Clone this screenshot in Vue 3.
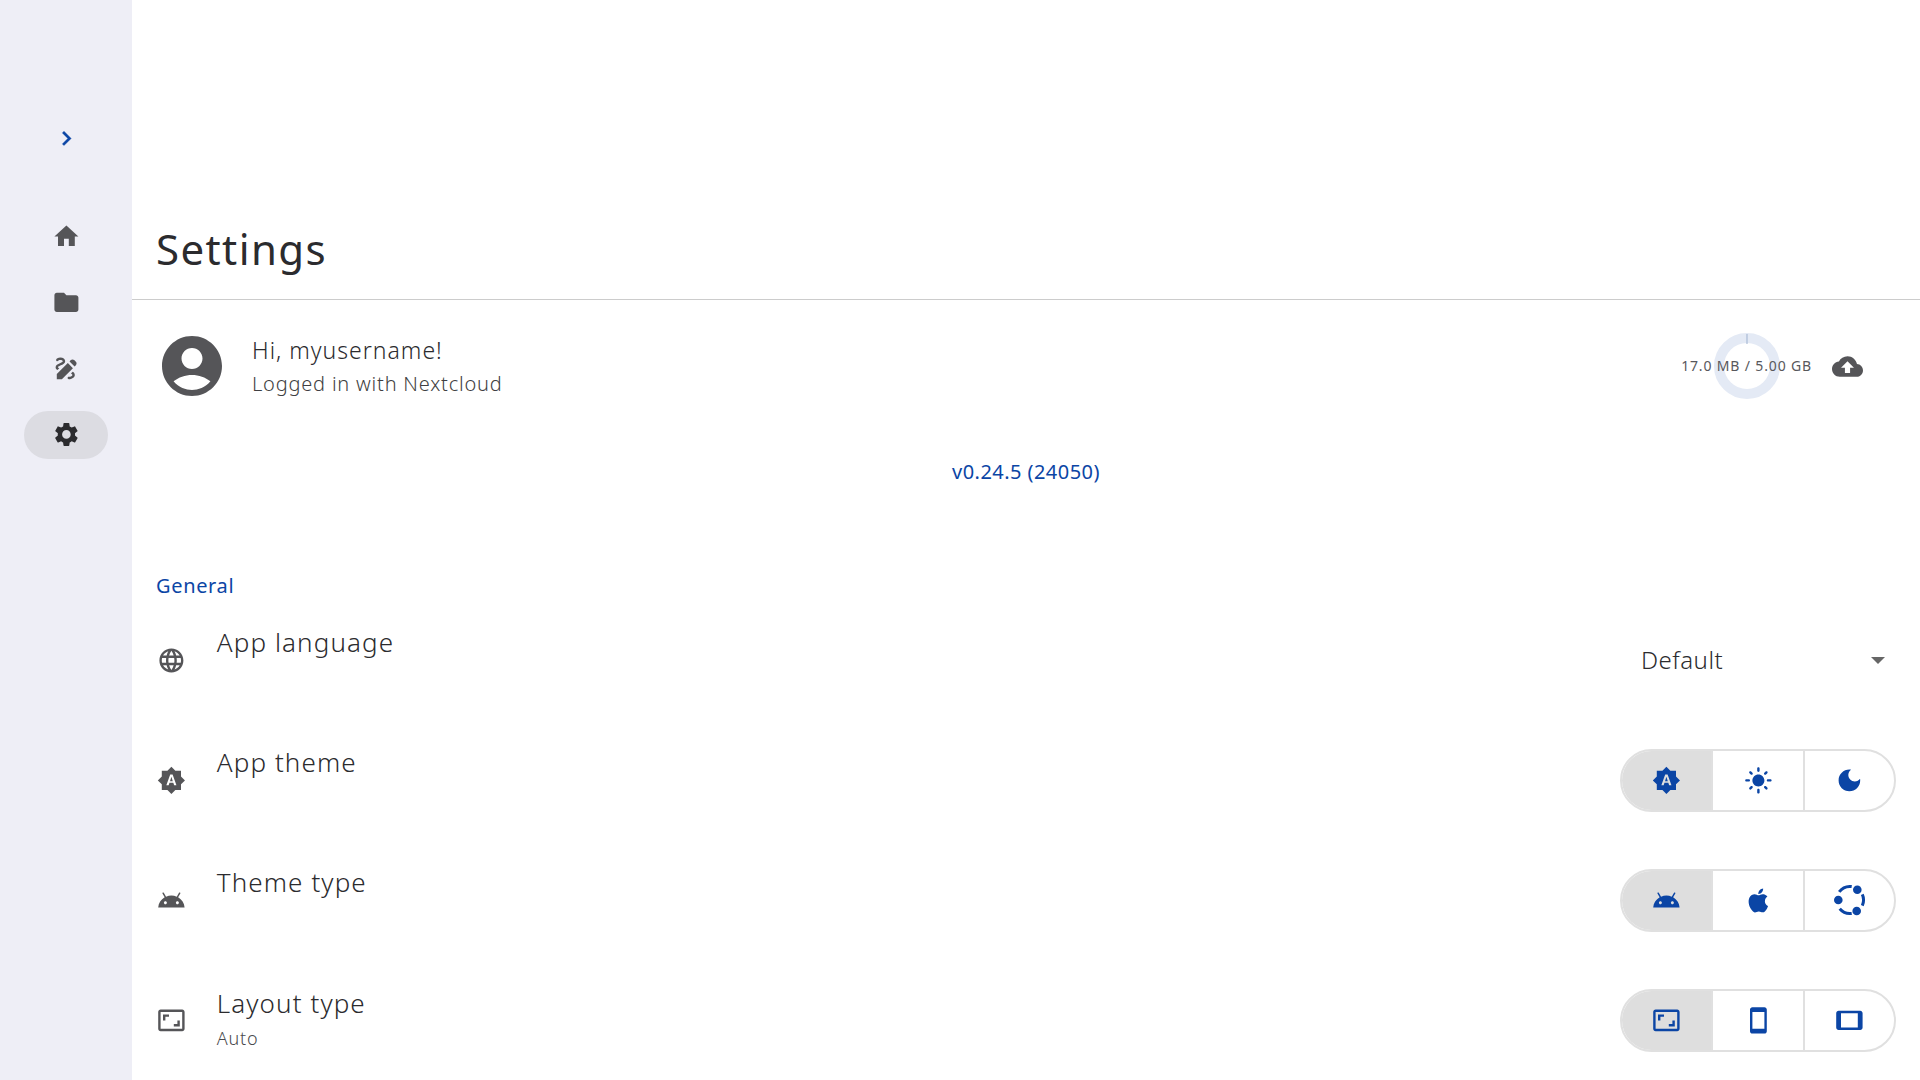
<script setup>
const p = {
  home: 'M10 20v-6h4v6h5v-8h3L12 3 2 12h3v8z',
  folder: 'M10 4H4c-1.1 0-1.99.9-1.99 2L2 18c0 1.1.9 2 2 2h16c1.1 0 2-.9 2-2V8c0-1.1-.9-2-2-2h-8l-2-2z',
  draw: 'M18.85 10.39l1.06-1.06c.78-.78.78-2.05 0-2.83L18.5 5.09c-.78-.78-2.05-.78-2.83 0l-1.06 1.06 4.24 4.24zm-5.66-2.83L4 16.76V21h4.24l9.19-9.19-4.24-4.25zM19 17.5c0 2.19-2.54 3.5-5 3.5-.55 0-1-.45-1-1s.45-1 1-1c1.54 0 3-.73 3-1.5 0-.47-.48-.87-1.23-1.2l1.48-1.48c1.07.63 1.75 1.47 1.75 2.68zM4.58 13.35C3.61 12.79 3 12.06 3 11c0-1.8 1.89-2.63 3.56-3.36C7.59 7.18 9 6.56 9 6c0-.41-.78-1-2-1-1.26 0-1.8.61-1.83.64-.35.41-.98.46-1.4.12-.41-.34-.49-.95-.15-1.37C3.73 4.24 4.76 3 7 3s4 1.32 4 3c0 1.87-1.93 2.72-3.64 3.47C6.42 9.88 5 10.5 5 11c0 .31.43.6 1.07.86l-1.49 1.49z',
  gear: 'M19.14 12.94c.04-.3.06-.61.06-.94 0-.32-.02-.64-.07-.94l2.03-1.58c.18-.14.23-.41.12-.61l-1.92-3.32c-.12-.22-.37-.29-.59-.22l-2.39.96c-.5-.38-1.03-.7-1.62-.94l-.36-2.54c-.04-.24-.24-.41-.48-.41h-3.84c-.24 0-.43.17-.47.41l-.36 2.54c-.59.24-1.13.57-1.62.94l-2.39-.96c-.22-.08-.47 0-.59.22L2.74 8.87c-.12.21-.08.47.12.61l2.03 1.58c-.05.3-.09.63-.09.94s.02.64.07.94l-2.03 1.58c-.18.14-.23.41-.12.61l1.92 3.32c.12.22.37.29.59.22l2.39-.96c.5.38 1.03.7 1.62.94l.36 2.54c.05.24.24.41.48.41h3.84c.24 0 .44-.17.47-.41l.36-2.54c.59-.24 1.13-.56 1.62-.94l2.39.96c.22.08.47 0 .59-.22l1.92-3.32c.12-.22.07-.47-.12-.61l-2.01-1.58zM12 15.6c-1.98 0-3.6-1.62-3.6-3.6s1.62-3.6 3.6-3.6 3.6 1.62 3.6 3.6-1.62 3.6-3.6 3.6z',
  account: 'M12 2C6.48 2 2 6.48 2 12s4.48 10 10 10 10-4.48 10-10S17.52 2 12 2zm0 4c1.93 0 3.5 1.57 3.5 3.5S13.93 13 12 13s-3.5-1.57-3.5-3.5S10.07 6 12 6zm0 14c-2.03 0-4.43-.82-6.14-2.88C7.55 15.8 9.68 15 12 15s4.45.8 6.14 2.12C16.43 19.18 14.03 20 12 20z',
  cloud: 'M19.35 10.04C18.67 6.59 15.64 4 12 4 9.11 4 6.6 5.64 5.35 8.04 2.34 8.36 0 10.91 0 14c0 3.31 2.69 6 6 6h13c2.76 0 5-2.24 5-5 0-2.64-2.05-4.78-4.65-4.96zM14 13v4h-4v-4H7l5-5 5 5h-3z',
  language: 'M11.99 2C6.47 2 2 6.48 2 12s4.47 10 9.99 10C17.52 22 22 17.52 22 12S17.52 2 11.99 2zm6.93 6h-2.95c-.32-1.25-.78-2.45-1.38-3.56 1.84.63 3.37 1.91 4.33 3.56zM12 4.04c.83 1.2 1.48 2.53 1.91 3.96h-3.82c.43-1.43 1.08-2.76 1.91-3.96zM4.26 14C4.1 13.36 4 12.69 4 12s.1-1.36.26-2h3.38c-.08.66-.14 1.32-.14 2s.06 1.34.14 2H4.26zm.82 2h2.95c.32 1.25.78 2.45 1.38 3.56-1.84-.63-3.37-1.9-4.33-3.56zm2.95-8H5.08c.96-1.66 2.49-2.93 4.33-3.56C8.81 5.55 8.35 6.75 8.03 8zM12 19.96c-.83-1.2-1.48-2.53-1.91-3.96h3.82c-.43 1.43-1.08 2.76-1.91 3.96zM14.34 14H9.66c-.09-.66-.16-1.32-.16-2s.07-1.35.16-2h4.68c.09.65.16 1.32.16 2s-.07 1.34-.16 2zm.25 5.56c.6-1.11 1.06-2.31 1.38-3.56h2.95c-.96 1.65-2.49 2.93-4.33 3.56zM16.36 14c.08-.66.14-1.32.14-2s-.06-1.34-.14-2h3.38c.16.64.26 1.31.26 2s-.1 1.36-.26 2h-3.38z',
  auto: 'M10.85 12.65h2.3L12 9l-1.15 3.65zM20 8.69V4h-4.69L12 .69 8.69 4H4v4.69L.69 12 4 15.31V20h4.69L12 23.31 15.31 20H20v-4.69L23.31 12 20 8.69zM14.3 16l-.7-2h-3.2l-.7 2H7.8L11 7h2l3.2 9h-1.9z',
  sun: 'M12 7c-2.76 0-5 2.24-5 5s2.24 5 5 5 5-2.24 5-5-2.24-5-5-5zM2 13h2c.55 0 1-.45 1-1s-.45-1-1-1H2c-.55 0-1 .45-1 1s.45 1 1 1zm18 0h2c.55 0 1-.45 1-1s-.45-1-1-1h-2c-.55 0-1 .45-1 1s.45 1 1 1zM11 2v2c0 .55.45 1 1 1s1-.45 1-1V2c0-.55-.45-1-1-1s-1 .45-1 1zm0 18v2c0 .55.45 1 1 1s1-.45 1-1v-2c0-.55-.45-1-1-1s-1 .45-1 1zM5.99 4.58c-.39-.39-1.03-.39-1.41 0-.39.39-.39 1.03 0 1.41l1.06 1.06c.39.39 1.03.39 1.41 0s.39-1.03 0-1.41L5.99 4.58zm12.37 12.37c-.39-.39-1.03-.39-1.41 0-.39.39-.39 1.03 0 1.41l1.06 1.06c.39.39 1.03.39 1.41 0 .39-.39.39-1.03 0-1.41l-1.06-1.06zm1.06-10.96c.39-.39.39-1.03 0-1.41-.39-.39-1.03-.39-1.41 0l-1.06 1.06c-.39.39-.39 1.03 0 1.41s1.03.39 1.41 0l1.06-1.06zM7.05 18.36c.39-.39.39-1.03 0-1.41-.39-.39-1.03-.39-1.41 0l-1.06 1.06c-.39.39-.39 1.03 0 1.41s1.03.39 1.41 0l1.06-1.06z',
  moon: 'M12 3c-4.97 0-9 4.03-9 9s4.03 9 9 9 9-4.03 9-9c0-.46-.04-.92-.1-1.36-.98 1.37-2.58 2.26-4.4 2.26-2.98 0-5.4-2.42-5.4-5.4 0-1.81.89-3.42 2.26-4.4-.44-.06-.9-.1-1.36-.1z',
  android: 'M17.6 9.48l1.84-3.18c.16-.31.04-.69-.26-.85-.29-.15-.65-.06-.83.22l-1.88 3.24c-2.86-1.21-6.08-1.21-8.94 0L5.65 5.67c-.19-.29-.58-.38-.87-.2-.28.18-.37.54-.22.83L6.4 9.48C3.3 11.25 1.28 14.44 1 18h22c-.28-3.56-2.3-6.75-5.4-8.52zM7 15.25c-.69 0-1.25-.56-1.25-1.25s.56-1.25 1.25-1.25 1.25.56 1.25 1.25-.56 1.25-1.25 1.25zm10 0c-.69 0-1.25-.56-1.25-1.25s.56-1.25 1.25-1.25 1.25.56 1.25 1.25-.56 1.25-1.25 1.25z',
  apple: 'M18.71,19.5C17.88,20.74 17,21.95 15.66,21.97C14.32,22 13.89,21.18 12.37,21.18C10.84,21.18 10.37,21.95 9.1,22C7.79,22.05 6.8,20.68 5.96,19.47C4.25,17 2.94,12.45 4.7,9.39C5.57,7.87 7.13,6.91 8.82,6.88C10.1,6.86 11.32,7.75 12.11,7.75C12.89,7.75 14.37,6.68 15.92,6.84C16.57,6.87 18.39,7.1 19.56,8.82C19.47,8.88 17.39,10.1 17.41,12.63C17.44,15.65 20.06,16.66 20.09,16.67C20.06,16.74 19.67,18.11 18.71,19.5M13,3.5C13.73,2.67 14.94,2.04 15.94,2C16.07,3.17 15.6,4.35 14.9,5.19C14.21,6.04 13.07,6.7 11.95,6.61C11.8,5.46 12.36,4.26 13,3.5Z',
  aspect: 'M19 12h-2v3h-3v2h5v-5zM7 9h3V7H5v5h2V9zm14-6H3c-1.1 0-2 .9-2 2v14c0 1.1.9 2 2 2h18c1.1 0 2-.9 2-2V5c0-1.1-.9-2-2-2zm0 16.01H3V4.99h18v14.02z',
  phone: 'M17 1.01L7 1c-1.1 0-2 .9-2 2v18c0 1.1.9 2 2 2h10c1.1 0 2-.9 2-2V3c0-1.1-.9-1.99-2-1.99zM17 19H7V5h10v14z',
  tablet: 'M21 4H3c-1.1 0-1.99.9-1.99 2L1 18c0 1.1.9 2 2 2h18c1.1 0 1.99-.9 1.99-2L23 6c0-1.1-.9-2-2-2zm-2 14H5V6h14v12z',
  chevron: 'M10 6L8.59 7.41 13.17 12l-4.58 4.59L10 18l6-6z'
}
const nav = [
  { icon: p.home }, { icon: p.folder }, { icon: p.draw }, { icon: p.gear, active: true }
]
const rows = [
  { title: 'App theme', icon: p.auto, opts: [p.auto, p.sun, p.moon] },
  { title: 'Theme type', icon: p.android, opts: [p.android, p.apple, 'ubuntu'] },
  { title: 'Layout type', sub: 'Auto', icon: p.aspect, opts: [p.aspect, p.phone, p.tablet] }
]
</script>

<template>
  <div class="app">
    <aside class="rail">
      <svg class="ico chev" viewBox="0 0 24 24"><path :d="p.chevron" /></svg>
      <nav class="nav">
        <div v-for="(n, i) in nav" :key="i" class="nav-item" :class="{ active: n.active }">
          <svg class="ico" viewBox="0 0 24 24"><path :d="n.icon" /></svg>
        </div>
      </nav>
    </aside>
    <main class="main">
      <header class="head"><h1>Settings</h1></header>
      <section class="user">
        <svg class="avatar" viewBox="2 2 20 20"><path :d="p.account" /></svg>
        <div class="who">
          <div class="hi">Hi, myusername!</div>
          <div class="logged">Logged in with Nextcloud</div>
        </div>
        <div class="storage">
          <svg class="ring" viewBox="0 0 66 66">
            <circle cx="33" cy="33" r="28" />
            <path d="M33 1v10" />
          </svg>
          <span class="usage">17.0 MB / 5.00 GB</span>
        </div>
        <svg class="ico cloud" viewBox="0 0 24 24"><path :d="p.cloud" /></svg>
      </section>
      <div class="version">v0.24.5 (24050)</div>
      <div class="section">General</div>
      <div class="row">
        <svg class="ico" viewBox="0 0 24 24"><path :d="p.language" /></svg>
        <div class="label"><div class="title">App language</div></div>
        <div class="select">
          <span>Default</span>
          <svg class="caret" viewBox="0 0 14 7"><path d="M0 0h14L7 7z" /></svg>
        </div>
      </div>
      <div v-for="r in rows" :key="r.title" class="row">
        <svg class="ico" viewBox="0 0 24 24"><path :d="r.icon" /></svg>
        <div class="label">
          <div class="title">{{ r.title }}</div>
          <div v-if="r.sub" class="sub">{{ r.sub }}</div>
        </div>
        <div class="seg">
          <div v-for="(o, i) in r.opts" :key="i" class="seg-btn" :class="{ on: i === 0 }">
            <svg v-if="o === 'ubuntu'" class="ubuntu" viewBox="0 0 32 32">
              <path class="arc" d="M5.2 7.9A13.5 13.5 0 0 1 17.7 2.6" />
              <path class="arc" d="M28.3 10.4A13.5 13.5 0 0 1 28.3 21.6" />
              <path class="arc" d="M5.7 24.8A13.5 13.5 0 0 0 17.7 29.4" />
              <circle cx="4.3" cy="16" r="4.3" />
              <circle cx="23.3" cy="5.7" r="4.3" />
              <circle cx="22.7" cy="27" r="4.3" />
            </svg>
            <svg v-else class="ico" viewBox="0 0 24 24"><path :d="o" /></svg>
          </div>
        </div>
      </div>
    </main>
  </div>
</template>

<style>
html, body { margin: 0; background: #fff; overflow: hidden; }
</style>

<style scoped>
.app {
  display: flex;
  width: 1920px;
  height: 1080px;
  overflow: hidden;
  font-family: "Noto Sans", "Open Sans", sans-serif;
  color: #2b2b2e;
}
.rail {
  width: 132px;
  flex: none;
  background: #eeeef6;
  display: flex;
  flex-direction: column;
  align-items: center;
  padding-top: 124px;
  box-sizing: border-box;
}
.ico { width: 28.8px; height: 28.8px; fill: #555558; display: block; flex: none; }
.chev { fill: #0b45a5; stroke: #0b45a5; stroke-width: 0.3; }
.nav { margin-top: 60px; display: flex; flex-direction: column; gap: 18px; }
.nav-item {
  width: 84px;
  height: 48px;
  border-radius: 24px;
  display: flex;
  align-items: center;
  justify-content: center;
}
.nav-item.active { background: #dcdce2; }
.nav-item.active .ico { fill: #2b2b2e; }
.main { flex: 1; min-width: 0; display: flex; flex-direction: column; }
.head {
  height: 277px;
  border-bottom: 1px solid #ccc;
  display: flex;
  align-items: flex-end;
  padding: 0 24px 22px;
}
h1 { margin: 0; font-size: 42px; line-height: 54px; font-weight: 400; color: #2b2b2e; letter-spacing: 1.4px; position: relative; top: -1px; }
.user {
  height: 132px;
  display: flex;
  align-items: center;
  padding: 0 57px 0 30px;
}
.avatar { width: 60px; height: 60px; fill: #555558; flex: none; }
.who { margin-left: 30px; flex: 1; }
.hi { font-size: 23px; line-height: 32px; letter-spacing: 1px; font-weight: 300; }
.logged { font-size: 20px; line-height: 30px; letter-spacing: 0.8px; color: #3f3f42; font-weight: 300; margin-top: 3px; }
.storage {
  position: relative;
  display: flex;
  align-items: center;
  justify-content: center;
  margin-right: 20px;
}
.usage { position: relative; font-size: 14px; letter-spacing: 0.85px; color: #58585c; white-space: nowrap; top: -1px; }
.ring { position: absolute; left: 50%; top: 50%; width: 66px; height: 66px; margin: -33px 0 0 -33px; }
.ring circle { fill: none; stroke: #e4eaf5; stroke-width: 10; }
.ring path { stroke: #a9bad6; stroke-width: 1.2; fill: none; }
.cloud { width: 31px; height: 31px; }
.version {
  margin-top: 25px;
  height: 30px;
  line-height: 30px;
  text-align: center;
  font-size: 20px;
  color: #0b45a5;
  letter-spacing: 0.45px;
}
.section {
  margin-top: 84px;
  padding-left: 24px;
  height: 29px;
  line-height: 30px;
  font-size: 20px;
  color: #0b45a5;
  letter-spacing: 0.65px;
}
.row {
  height: 120px;
  display: flex;
  align-items: center;
  padding: 0 24px 0 25px;
  flex: none;
}
.label { align-self: flex-start; margin-left: 31px; flex: 1; padding-top: 25px; }
.title { font-size: 26px; line-height: 34px; letter-spacing: 1.1px; font-weight: 300; }
.sub { font-size: 18px; line-height: 26px; color: #4a4a4d; letter-spacing: 0.8px; font-weight: 300; margin-top: 6px; }
.row:last-child .title { position: relative; top: 1px; }
.select {
  width: 255px;
  display: flex;
  align-items: center;
  justify-content: space-between;
  font-size: 24px;
  font-weight: 300;
  letter-spacing: 0.5px;
  padding-right: 11px;
  box-sizing: border-box;
  position: relative;
  top: -1px;
}
.caret { width: 14px; height: 7px; fill: #666; position: relative; top: 1px; }
.seg {
  width: 276px;
  height: 63px;
  box-sizing: border-box;
  border: 2px solid #e0e0e0;
  border-radius: 32px;
  overflow: hidden;
  display: flex;
}
.seg-btn {
  flex: 1;
  display: flex;
  align-items: center;
  justify-content: center;
  border-left: 2px solid #e0e0e0;
}
.seg-btn:first-child { border-left: 0; }
.seg-btn.on { background: #dedede; }
.seg-btn .ico { fill: #0b45a5; }
.ubuntu { width: 32px; height: 32px; fill: #0b45a5; flex: none; margin-left: 2px; }
.ubuntu .arc { fill: none; stroke: #0b45a5; stroke-width: 3; }
</style>
